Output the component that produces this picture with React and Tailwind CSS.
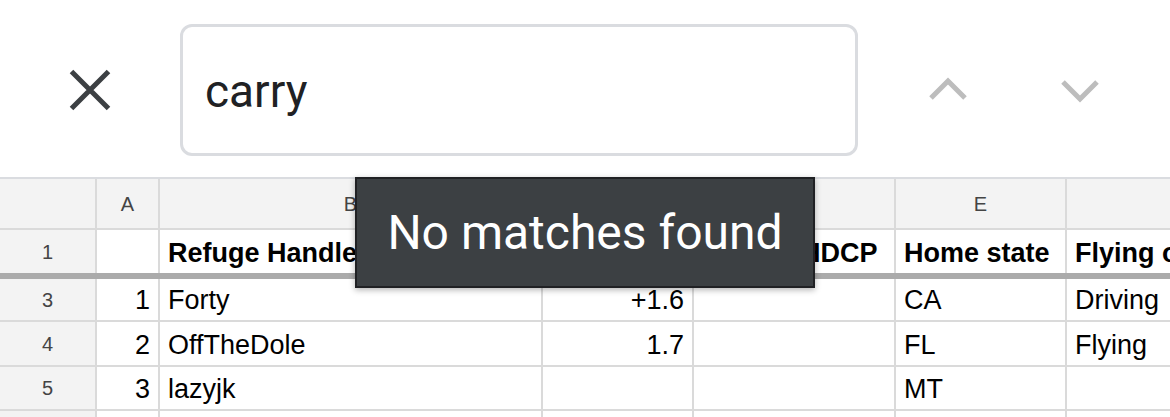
import React from 'react';

// columnas de la hoja: encabezado de fila, A..F
const colsClass = 'grid grid-cols-[97px_63px_383px_151px_202px_171px_280px]';
const line = 'border-[#dadada]';

const letters = ['', 'A', 'B', 'C', 'D', 'E', 'F'];
const align = ['', 'justify-end', 'justify-start', 'justify-end', 'justify-start', 'justify-start', 'justify-start'];

const rows = [
    { n: '3', h: 'h-[43px]', cells: ['1', 'Forty', '+1.6', '', 'CA', 'Driving'] },
    { n: '4', h: 'h-[45px]', cells: ['2', 'OffTheDole', '1.7', '', 'FL', 'Flying'] },
    { n: '5', h: 'h-[44px]', cells: ['3', 'lazyjk', '', '', 'MT', ''] },
    { n: '', h: 'h-[44px]', cells: ['', '', '', '', '', ''] },
];

const header = ['', 'Refuge Handle', 'Index', 'Refuge HDCP', 'Home state', 'Flying or Driving'];

const CloseIcon = () => (
    <svg width="42" height="42" viewBox="0 0 42 42" className="block">
        <path d="M2.5 2.5 39.5 39.5M39.5 2.5 2.5 39.5" stroke="#3c4043" strokeWidth="5" fill="none" />
    </svg>
);

const Chevron = ({ up }) => (
    <svg width="40" height="24" viewBox="0 0 40 24" className="block">
        <polyline
            points={up ? '3,21 20,4 37,21' : '3,3 20,20 37,3'}
            stroke="#bdbdbd"
            strokeWidth="5"
            fill="none"
            strokeLinejoin="miter"
        />
    </svg>
);

export default function App() {
    return (
        <div className="relative h-[417px] w-[1170px] overflow-hidden bg-white">
            {/* Barra de búsqueda */}
            <div className="flex h-[177px] items-start pt-[24px] font-['Roboto',sans-serif]">
                <button className="ml-[69px] mt-[45px]">
                    <CloseIcon />
                </button>
                <div className="ml-[69px] flex h-[132px] w-[678px] items-center rounded-[12px] border-[3px] border-[#dadce0] pl-[22px] pt-[2px] text-[46px] text-[#202124]">
                    carry
                </div>
                <div className="ml-[70px] mt-[53px]">
                    <Chevron up />
                </div>
                <div className="ml-[92px] mt-[55px]">
                    <Chevron />
                </div>
            </div>

            {/* Hoja */}
            <div className="border-t-2 border-[#dadce0] font-['Liberation_Sans',Arial,sans-serif]">
                {/* Letras de columna */}
                <div className={`${colsClass} h-[51px] bg-[#f3f3f3]`}>
                    {letters.map((l, i) => (
                        <div key={i} className={`flex items-center justify-center border-b-2 border-r-2 ${line} text-[20px] text-[#444]`}>
                            {l}
                        </div>
                    ))}
                </div>

                {/* Fila 1 (encabezado congelado) */}
                <div className={`${colsClass} h-[43px]`}>
                    <div className={`flex items-center justify-center border-r-2 ${line} bg-[#f3f3f3] text-[20px] text-[#444]`}>1</div>
                    {header.map((t, i) => (
                        <div key={i} className={`flex items-end overflow-hidden whitespace-nowrap border-r-2 ${line} px-[8px] pb-0 text-[27px] font-bold text-black`}>
                            {t}
                        </div>
                    ))}
                </div>
                <div className="h-[6px] bg-[#ababab]" />

                {rows.map((r, i) => (
                    <div key={i} className={`${colsClass} ${r.h}`}>
                        <div className={`flex items-center justify-center border-b-2 border-r-2 ${line} bg-[#f3f3f3] text-[20px] text-[#444]`}>
                            {r.n}
                        </div>
                        {r.cells.map((c, j) => (
                            <div key={j} className={`flex items-end ${align[j + 1]} whitespace-nowrap border-b-2 border-r-2 ${line} px-[8px] pb-0 text-[27px] text-black`}>
                                {c}
                            </div>
                        ))}
                    </div>
                ))}
            </div>

            {/* Aviso */}
            <div className="absolute left-[355px] top-[177px] flex h-[111px] w-[460px] items-center justify-center border-2 border-[#202124] bg-[#3c4043] font-['Roboto',sans-serif] text-[48px] text-white shadow-[0_2px_6px_rgba(0,0,0,0.3)]">
                No matches found
            </div>
        </div>
    );
}
